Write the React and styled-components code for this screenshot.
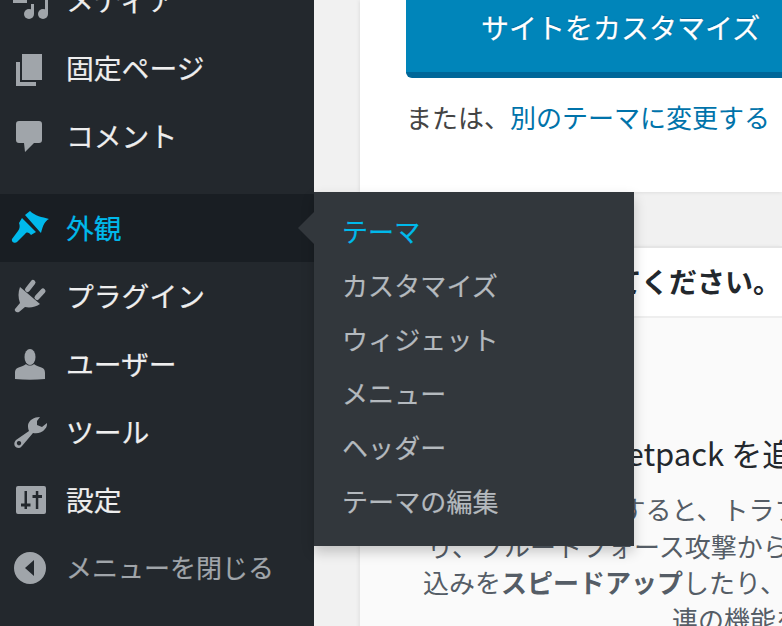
import React from 'react'
import styled, { createGlobalStyle } from 'styled-components'

const GlobalStyle = createGlobalStyle`
  html, body {
    margin: 0;
    padding: 0;
    background: #f1f1f1;
  }
`

const font = `"Noto Sans CJK JP", "Noto Sans", sans-serif`

const Page = styled.div`
  width: 782px;
  height: 626px;
  overflow: hidden;
  display: flex;
  position: relative;
  font-family: ${font};
  background: #f1f1f1;
`
const Sidebar = styled.nav`
  width: 314px;
  flex: none;
  background: #23282d;
  margin-top: -34px;
  height: 660px;
  position: relative;
  z-index: 2;
`
const Row = styled.div`
  height: 68px;
  display: flex;
  align-items: center;
  padding-left: 10px;
  gap: 16px;
  white-space: nowrap;
  color: ${p => p.$active ? '#00b9eb' : p.$muted ? '#a0a5aa' : '#eeeeee'};
  background: ${p => p.$active ? '#191e23' : 'transparent'};
  position: relative;
`
const Label = styled.span`
  font-size: ${p => p.$small ? 26 : 27.8}px;
  line-height: 40px;
  margin-bottom: 3px;
  -webkit-text-stroke: 0.2px currentColor;
`
const Separator = styled.div`
  height: 24px;
`
const IconBox = styled.svg`
  width: 40px;
  height: 40px;
  flex: none;
  fill: ${p => p.$color || '#a0a5aa'};
  stroke: none;
`
const Flyout = styled.ul`
  position: absolute;
  left: 314px;
  top: -2px;
  width: 320px;
  height: 354px;
  box-sizing: border-box;
  margin: 0;
  padding: 12px 0 0 28px;
  list-style: none;
  background: #32373c;
  box-shadow: 0 6px 12px rgba(0, 0, 0, 0.2);
  &::before {
    content: '';
    position: absolute;
    left: -16px;
    top: 20px;
    border: 16px solid transparent;
    border-left: 0;
    border-right-color: #32373c;
  }
`
const FlyoutItem = styled.li`
  height: 54px;
  line-height: 54px;
  font-size: 26px;
  letter-spacing: 0.1px;
  -webkit-text-stroke: 0.2px currentColor;
  color: ${p => p.$active ? '#00b9eb' : '#b4b9be'};
`
const Main = styled.main`
  flex: 1;
  min-width: 0;
  padding-left: 46px;
  display: flex;
  flex-direction: column;
`
const TopCard = styled.section`
  height: 192px;
  flex: none;
  background: #fff;
  box-shadow: -2px 0 3px rgba(0, 0, 0, 0.04), 0 2px 3px rgba(0, 0, 0, 0.04);
  padding-left: 46px;
`
const CustomizeButton = styled.div`
  height: 78px;
  margin-right: -20px;
  box-sizing: border-box;
  background: #0085ba;
  border-bottom: 6px solid #006799;
  border-radius: 0 0 6px 6px;
  color: #fff;
  font-size: 28px;
  line-height: 54px;
  padding-left: 75px;
  white-space: nowrap;
  text-shadow: 0 -1px 1px #006799;
  -webkit-text-stroke: 0.2px currentColor;
`
const OrLine = styled.p`
  margin: 17px 0 0;
  font-size: 26px;
  line-height: 44px;
  white-space: nowrap;
  color: #444;
`
const OrLink = styled.span`
  color: #0073aa;
`
const NoticeCard = styled.section`
  margin-top: 54px;
  flex: none;
  background: #fafafa;
  box-shadow: -2px 0 3px rgba(0, 0, 0, 0.05);
  border-top: 2px solid #e5e5e5;
`
const NoticeHead = styled.h2`
  margin: 0;
  height: 70px;
  box-sizing: border-box;
  background: #fff;
  border-bottom: 2px solid #eee;
  text-align: right;
  padding-right: 1px;
  font-size: 28px;
  line-height: 66px;
  font-weight: 700;
  color: #23282d;
  white-space: nowrap;
`
const NoticeBody = styled.div`
  padding-top: 115px;
  padding-left: 63px;
  white-space: nowrap;
`
const PitchTitle = styled.h3`
  margin: 0 0 18px;
  padding-left: 187px;
  font-size: 31px;
  line-height: 40px;
  font-weight: 400;
  color: #23282d;
`
const PitchLine = styled.div`
  font-size: 26px;
  line-height: 36.5px;
  color: #555d66;
  padding-left: ${p => p.$indent || 0}px;
  strong {
    font-weight: 700;
  }
`

const Media = () => (
  <IconBox viewBox="0 0 40 40">
    <path d="M3 2h14v21H3z" />
    <circle cx="19" cy="34" r="5" />
    <circle cx="33" cy="34" r="5" />
    <path d="M35 14h3v20h-3zM21 24h3v10h-3z" />
  </IconBox>
)
const Pages = () => (
  <IconBox viewBox="0 0 40 40">
    <path d="M12 6h20v26H12z" />
    <path d="M6 14h4v20h16v4H6z" />
  </IconBox>
)
const Comment = () => (
  <IconBox viewBox="0 0 40 40">
    <path d="M9 5h20a3 3 0 0 1 3 3v16a3 3 0 0 1-3 3h-5l-9 9-1-9H9a3 3 0 0 1-3-3V8a3 3 0 0 1 3-3z" />
  </IconBox>
)
const Brush = () => (
  <IconBox viewBox="0 0 40 40" $color="#00b9eb">
    <path d="M15 7L20 3C25 8 32 9 39 11C35 13 33 17 31 25L30 24z" />
    <path d="M12 10L26 24L21 27C18 24 17 24 15 26L7 34C5 36 1 34 2 31L8 23C10 20 10 18 9 15z" />
  </IconBox>
)
const Plugin = () => (
  <IconBox viewBox="0 0 40 40">
    <path d="M10 11L30 28C26 31 20 32 15 31L9 36C7 37 4 35 5 33L10 27C8 22 8 16 10 11z" />
    <line x1="23" y1="6.500" x2="17.500" y2="13.500" stroke="#a0a5aa" strokeWidth="5" strokeLinecap="round" />
    <line x1="33" y1="15" x2="27" y2="21.500" stroke="#a0a5aa" strokeWidth="5" strokeLinecap="round" />
  </IconBox>
)
const User = () => (
  <IconBox viewBox="0 0 40 40">
    <ellipse cx="20" cy="13" rx="5.500" ry="8" />
    <path d="M5 35v-6c0-3 1-5 5-6 3-1 5-2 6-3 2 2 6 2 8 0 1 1 3 2 6 3 4 1 5 3 5 6v6c-10 1-20 1-30 0z" />
  </IconBox>
)
const Wrench = () => (
  <IconBox viewBox="0 0 40 40">
    <path fillRule="evenodd" d="M30 5C24 5 19 8 18 13C18 15 18 17 19 19L6 28C3 31 4 36 9 36C10 36 11 35 12 34L23 21C27 22 32 21 35 17C37 15 37 13 37 11L32 15L27 13L27 9zM9 29a2.200 2.200 0 1 1-.01 0z" />
  </IconBox>
)
const Settings = () => (
  <IconBox viewBox="0 0 40 40">
    <path fillRule="evenodd" d="M8 6h26a2 2 0 0 1 2 2v24a2 2 0 0 1-2 2H8a2 2 0 0 1-2-2V8a2 2 0 0 1 2-2zM14.500 11v12.500H11v3h3.500V29H17v-2.500h3.500v-3H17V11zM25.800 11v4H22.500v3h3.300v11h2.500V18H32v-3h-3.700v-4z" />
  </IconBox>
)
const Collapse = () => (
  <IconBox viewBox="0 0 40 40">
    <path fillRule="evenodd" d="M20 4a16 16 0 1 1 0 32 16 16 0 0 1 0-32zM24 12L15 20l9 8z" />
  </IconBox>
)

const submenu = ['カスタマイズ', 'ウィジェット', 'メニュー', 'ヘッダー', 'テーマの編集']

export default function App() {
  return (
    <Page>
      <GlobalStyle />
      <Sidebar>
        <Row><Media /><Label>メディア</Label></Row>
        <Row><Pages /><Label>固定ページ</Label></Row>
        <Row><Comment /><Label>コメント</Label></Row>
        <Separator />
        <Row $active>
          <Brush /><Label>外観</Label>
          <Flyout>
            <FlyoutItem $active>テーマ</FlyoutItem>
            {submenu.map(label => <FlyoutItem key={label}>{label}</FlyoutItem>)}
          </Flyout>
        </Row>
        <Row><Plugin /><Label>プラグイン</Label></Row>
        <Row><User /><Label>ユーザー</Label></Row>
        <Row><Wrench /><Label>ツール</Label></Row>
        <Row><Settings /><Label>設定</Label></Row>
        <Row $muted><Collapse /><Label $small>メニューを閉じる</Label></Row>
      </Sidebar>
      <Main>
        <TopCard>
          <CustomizeButton>サイトをカスタマイズ</CustomizeButton>
          <OrLine>または、<OrLink>別のテーマに変更する</OrLink></OrLine>
        </TopCard>
        <NoticeCard>
          <NoticeHead>有効化してください。</NoticeHead>
          <NoticeBody>
            <PitchTitle>Jetpack を追加</PitchTitle>
            <PitchLine $indent={17}>Jetpack を利用すると、トラブル</PitchLine>
            <PitchLine $indent={4}>り、ブルートフォース攻撃から</PitchLine>
            <PitchLine $indent={0}>込みを<strong>スピードアップ</strong>したり、</PitchLine>
            <PitchLine $indent={249}>連の機能を</PitchLine>
          </NoticeBody>
        </NoticeCard>
      </Main>
    </Page>
  )
}
